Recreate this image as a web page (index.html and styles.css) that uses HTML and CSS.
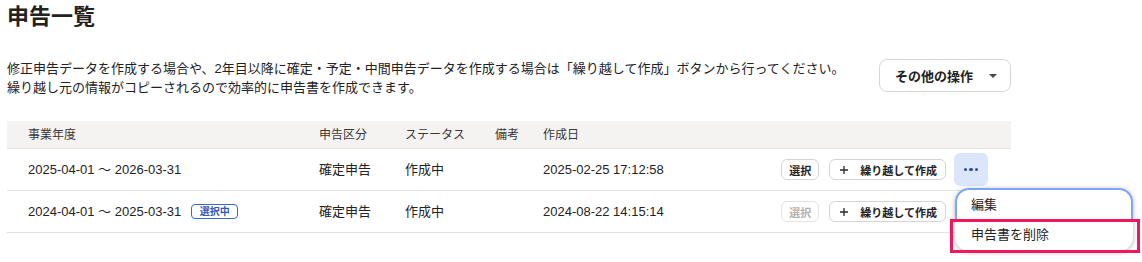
FILE: index.html
```html
<!DOCTYPE html>
<html lang="ja">
<head>
<meta charset="utf-8">
<title>申告一覧</title>
<link rel="stylesheet" href="styles.css">
</head>
<body>
<main class="page">
  <h1 class="title">申告一覧</h1>
  <div class="intro">
    <p class="desc">修正申告データを作成する場合や、2年目以降に確定・予定・中間申告データを作成する場合は「繰り越して作成」ボタンから行ってください。<br>繰り越し元の情報がコピーされるので効率的に申告書を作成できます。</p>
    <button class="more-btn" type="button">その他の操作<svg class="caret" width="8" height="4" viewBox="0 0 8 4"><path d="M0 0h8L4 4z" fill="#4a4845"/></svg></button>
  </div>

  <div class="table">
    <div class="row head">
      <div>事業年度</div>
      <div>申告区分</div>
      <div>ステータス</div>
      <div>備考</div>
      <div>作成日</div>
      <div></div>
    </div>
    <div class="row">
      <div>2025-04-01 ～ 2026-03-31</div>
      <div>確定申告</div>
      <div>作成中</div>
      <div></div>
      <div>2025-02-25 17:12:58</div>
      <div class="actions">
        <button class="btn" type="button">選択</button>
        <button class="btn carry" type="button"><svg width="16" height="16" viewBox="0 0 16 16"><path d="M8 4v8M4 8h8" stroke="#2b2a28" stroke-width="1.3" fill="none"/></svg>繰り越して作成</button>
        <div class="kebab-wrap">
          <button class="kebab active" type="button" aria-label="メニュー"><span></span><span></span><span></span></button>
          <div class="menu">
            <div class="menu-item focused">編集</div>
            <div class="menu-item">申告書を削除</div>
            <div class="annot"></div>
          </div>
        </div>
      </div>
    </div>
    <div class="row">
      <div class="period">2024-04-01 ～ 2025-03-31<span class="badge">選択中</span></div>
      <div>確定申告</div>
      <div>作成中</div>
      <div></div>
      <div>2024-08-22 14:15:14</div>
      <div class="actions">
        <button class="btn disabled" type="button" disabled>選択</button>
        <button class="btn carry" type="button"><svg width="16" height="16" viewBox="0 0 16 16"><path d="M8 4v8M4 8h8" stroke="#2b2a28" stroke-width="1.3" fill="none"/></svg>繰り越して作成</button>
        <div class="kebab-wrap">
          <button class="kebab" type="button" aria-label="メニュー"><span></span><span></span><span></span></button>
        </div>
      </div>
    </div>
  </div>
</main>
</body>
</html>
```

FILE: styles.css
```css
* { box-sizing: border-box; }

html, body {
  margin: 0;
  padding: 0;
  background: #ffffff;
}

body {
  min-height: 262px;
  font-family: "Liberation Sans", "Noto Sans CJK JP", sans-serif;
  color: #23221f;
  font-size: 13px;
}

.page {
  padding: 2px 0 30px 7px;
  width: 1011px;
}

.title {
  margin: 0;
  font-size: 22px;
  line-height: 30px;
  font-weight: 700;
  color: #23221f;
}

.intro {
  margin-top: 27px;
  display: flex;
  justify-content: space-between;
  align-items: flex-start;
}

.desc {
  margin: 0;
  padding-top: 1px;
  font-size: 13px;
  line-height: 18.5px;
  white-space: nowrap;
}

.more-btn {
  display: inline-flex;
  align-items: center;
  gap: 16px;
  height: 33px;
  padding: 0 13px 0 15px;
  border: 1px solid #d9d6d3;
  border-radius: 8px;
  background: #ffffff;
  font-family: inherit;
  font-size: 13px;
  font-weight: 700;
  color: #23221f;
}

.caret { display: block; }

.table {
  margin-top: 24px;
}

.row {
  display: grid;
  grid-template-columns: 291px 86px 90px 48px 1fr auto;
  align-items: center;
  height: 42px;
  padding: 0 23px 0 21px;
  border-bottom: 1px solid #e4e2e0;
  font-size: 13px;
  line-height: 18px;
}

.row.head {
  height: 28px;
  background: #f5f3f2;
  border-bottom: 1px solid #e4e2e0;
  font-size: 12px;
  color: #3a3835;
}

.period {
  display: flex;
  align-items: center;
}

.badge {
  display: inline-flex;
  align-items: center;
  justify-content: center;
  margin-left: 10px;
  height: 15px;
  padding: 0 7.5px;
  border: 1px solid #3a67c8;
  border-radius: 4px;
  font-size: 10px;
  line-height: 13px;
  font-weight: 700;
  color: #2f5bbd;
}

.actions {
  display: flex;
  align-items: center;
}

.btn {
  display: inline-flex;
  align-items: center;
  height: 21px;
  padding: 0 7px;
  border: 1px solid #d6d3d0;
  border-radius: 6px;
  background: #ffffff;
  font-family: inherit;
  font-size: 11px;
  font-weight: 700;
  color: #23221f;
}

.btn.disabled {
  color: #b3b1ae;
  border-color: #e5e3e1;
}

.btn.carry {
  margin-left: 10px;
  padding: 0 8px 0 6px;
  gap: 8px;
}

.btn.carry svg { display: block; }

.kebab-wrap {
  position: relative;
  margin-left: 8px;
}

.kebab {
  display: flex;
  align-items: center;
  justify-content: center;
  gap: 2.3px;
  width: 34px;
  height: 33px;
  padding: 0;
  border: none;
  border-radius: 6px;
  background: transparent;
}

.kebab.active {
  background: #dce6fb;
}

.kebab span {
  width: 3.2px;
  height: 3.2px;
  border-radius: 50%;
  background: #2d4c9e;
}

.menu {
  position: absolute;
  top: 35px;
  left: 1px;
  z-index: 10;
  width: 178px;
  background: #ffffff;
  border-radius: 14px;
  box-shadow: 0 1px 5px rgba(0, 0, 0, 0.3);
}

.menu-item {
  height: 32px;
  padding-left: 16px;
  display: flex;
  align-items: center;
  font-size: 13px;
  color: #23221f;
}

.menu-item.focused {
  height: 31px;
  padding-left: 14px;
  border: 2px solid #7ba6f7;
  border-bottom: none;
  border-radius: 14px 14px 0 0;
}

.annot {
  position: absolute;
  left: -5px;
  top: 31px;
  width: 190px;
  height: 34px;
  border: 3px solid #f2175d;
  pointer-events: none;
}
```
